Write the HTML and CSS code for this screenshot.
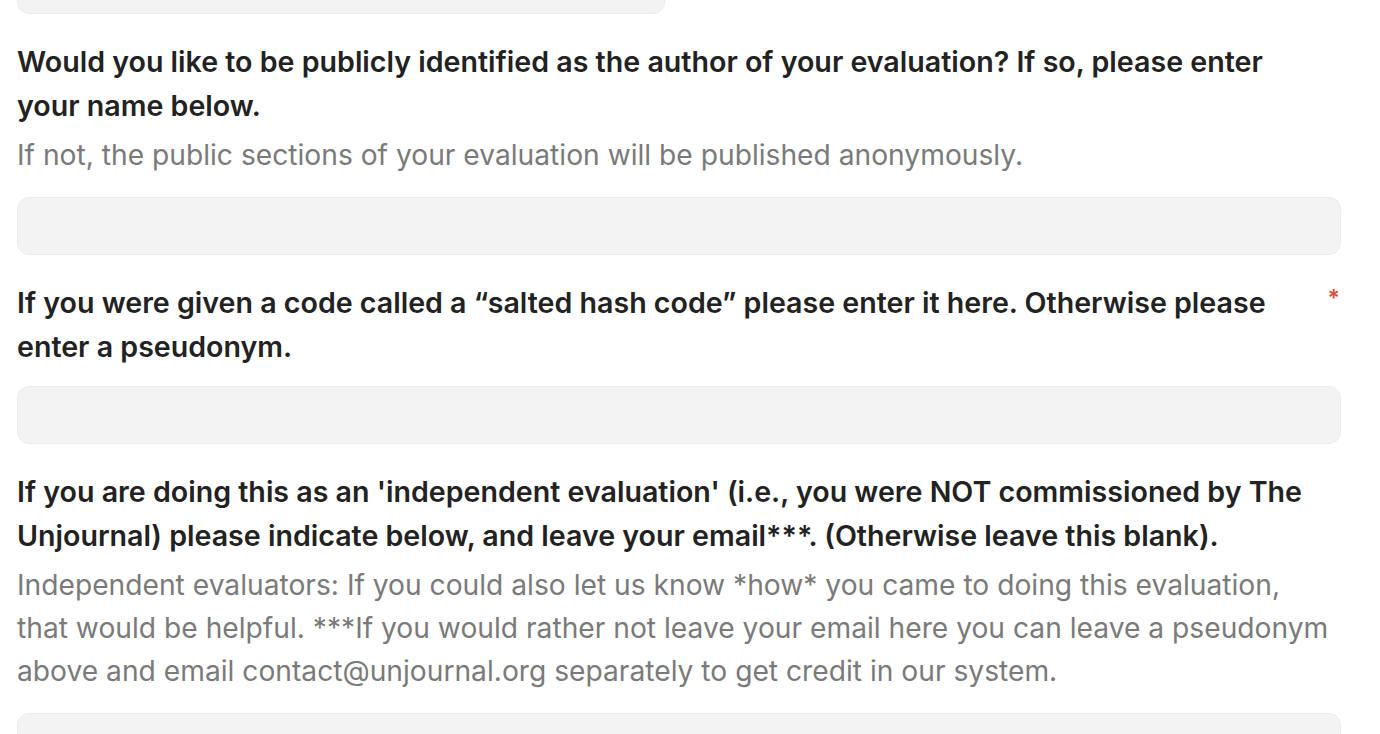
FILE: index.html
```html
<!DOCTYPE html>
<html lang="en">
<head>
    <meta charset="UTF-8">
    <meta name="viewport" content="width=device-width, initial-scale=1.0">
    <title>Evaluation form</title>
    <link rel="stylesheet" href="styles.css">
</head>
<body>
    <div class="form">
        <div class="field">
            <input type="text" class="input input-short">
        </div>

        <div class="field">
            <div class="label-row">
                <label class="label" for="author">Would you like to be publicly identified as the author of your evaluation? If so, please enter your name below.</label>
            </div>
            <p class="hint">If not, the public sections of your evaluation will be published anonymously.</p>
            <input type="text" id="author" class="input">
        </div>

        <div class="field">
            <div class="label-row">
                <label class="label" for="hash">If you were given a code called a “salted hash code” please enter it here. Otherwise please enter a pseudonym.</label>
                <span class="required">*</span>
            </div>
            <input type="text" id="hash" class="input">
        </div>

        <div class="field">
            <div class="label-row">
                <label class="label" for="email">If you are doing this as an 'independent evaluation' (i.e., you were NOT commissioned by The Unjournal) please indicate below, and leave your email***. (Otherwise leave this blank).</label>
            </div>
            <p class="hint">Independent evaluators: If you could also let us know *how* you came to doing this evaluation, that would be helpful. ***If you would rather not leave your email here you can leave a pseudonym above and email contact@unjournal.org separately to get credit in our system.</p>
            <input type="text" id="email" class="input">
        </div>
    </div>
</body>
</html>
```

FILE: styles.css
```css
body {
    margin: 0;
    background: #fff;
    font-family: Inter, "Liberation Sans", sans-serif;
    color: #222;
}
.form {
    width: 1324px;
    padding: 0 17px;
    margin-top: -44px;
}
.field {
    margin-bottom: 26px;
}
.label-row {
    display: flex;
    justify-content: space-between;
    align-items: flex-start;
}
.label {
    display: block;
    max-width: 1306px;
    font-size: 28.6px;
    font-weight: 600;
    line-height: 44px;
}
.required {
    color: #d94f3d;
    font-size: 23px;
    font-weight: 600;
    line-height: 24px;
    margin-top: 5px;
    margin-right: 1px;
}
.hint {
    margin: 6px 0 0;
    padding-right: 10px;
    font-size: 28.2px;
    line-height: 43px;
    color: #7a7a7a;
}
.input {
    display: block;
    box-sizing: border-box;
    width: 100%;
    height: 58px;
    margin-top: 17px;
    background: #f3f3f3;
    border: 1px solid #ececec;
    border-radius: 12px;
    font-size: 20px;
    padding: 0 16px;
    outline: none;
}
.hint + .input {
    margin-top: 20px;
}
.input-short {
    width: 648px;
    margin-top: 0;
}
```
